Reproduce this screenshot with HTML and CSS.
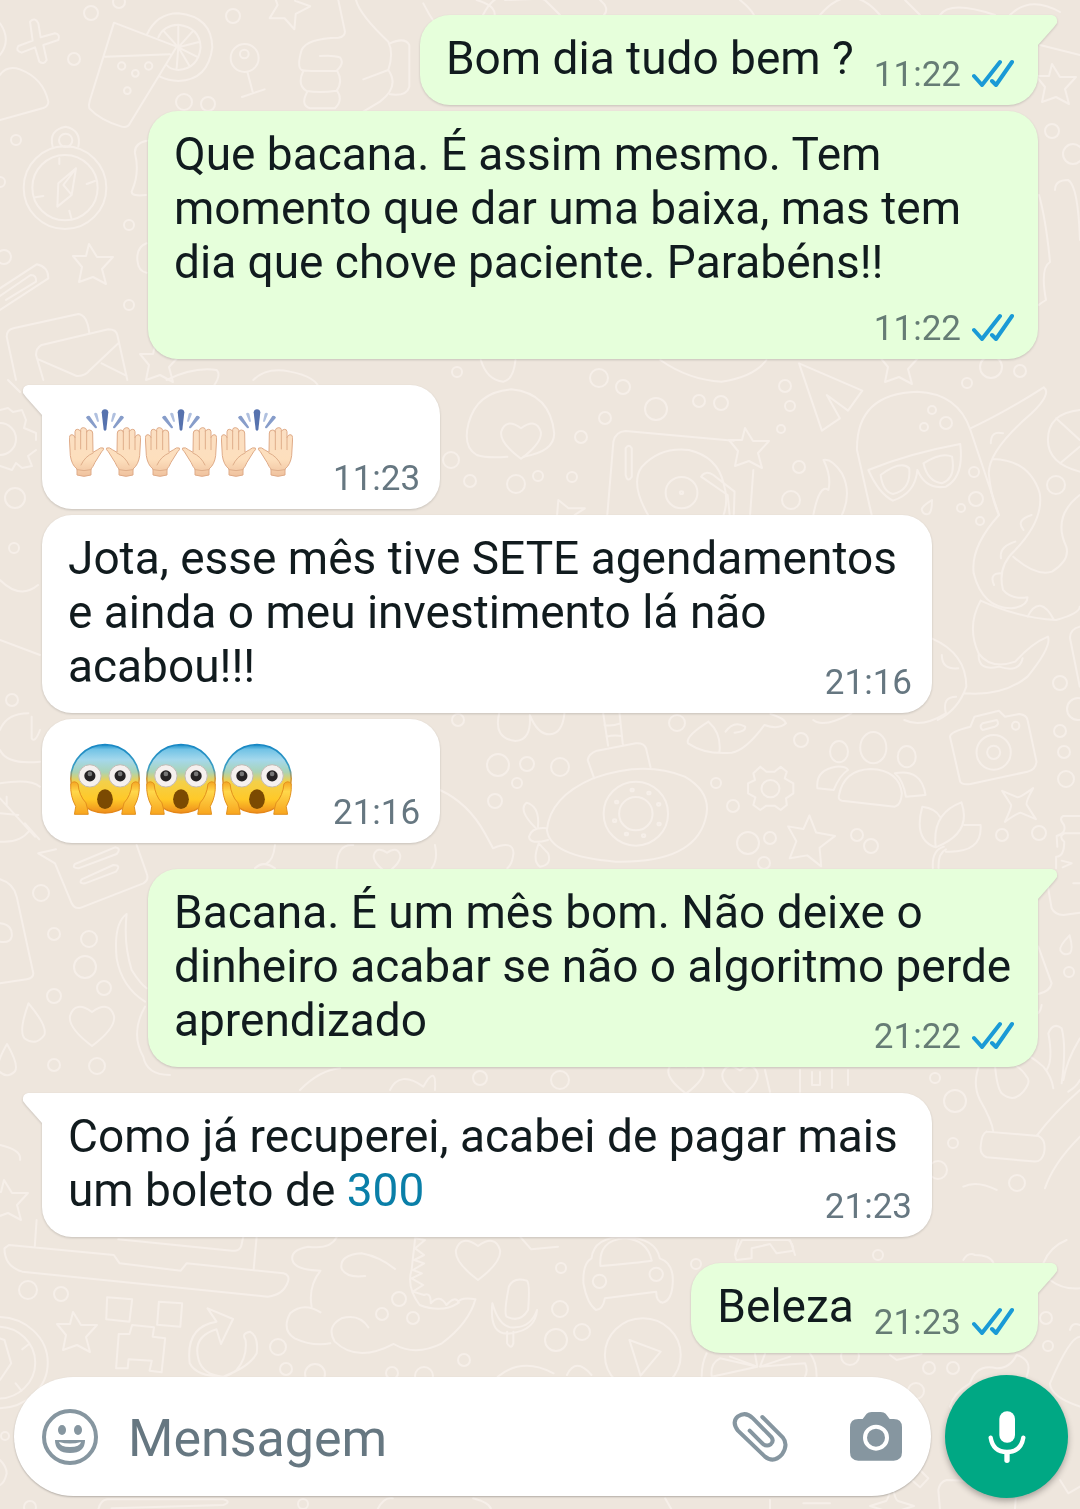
FILE: index.html
```html
<!DOCTYPE html>
<html lang="pt-BR">
<head>
    <meta charset="UTF-8">
    <meta name="viewport" content="width=device-width, initial-scale=1.0">
    <title>Conversa</title>
    <link rel="stylesheet" href="styles.css">
</head>
<body>
    <!-- Wallpaper -->
    <svg class="wallpaper" viewBox="0 0 1080 1509" preserveAspectRatio="xMidYMid slice" aria-hidden="true">
        <defs>
            <path id="star" d="M-4 -20L4 -7L20 -7L9 5L13 20L0 13L-14 18L-11 3L-20 -8L-7 -8Z"/>
            <path id="heart" d="M0 22Q-24 4 -22 -8Q-17 -24 0 -12Q17 -24 22 -8Q24 4 0 22Z"/>
            <path id="sparkle" d="M0 -22Q3 -6 6 -5L22 0L6 5Q4 7 0 22Q-4 7 -6 5L-22 0L-6 -5Q-4 -6 0 -22Z"/>
            <path id="drop" d="M0 -20Q-15 6 -10 14Q0 24 10 14Q15 6 0 -20Z"/>
        </defs>
        <!-- small bubbles -->
        <g>
            <circle cx="91" cy="13" r="7"/><circle cx="119" cy="2" r="6"/><circle cx="74" cy="59" r="6"/><circle cx="233" cy="16" r="7"/>
            <circle cx="184" cy="102" r="8"/><circle cx="208" cy="104" r="7"/><circle cx="16" cy="140" r="5"/><circle cx="0" cy="182" r="5"/>
            <circle cx="129" cy="225" r="5"/><circle cx="4" cy="257" r="7"/><circle cx="129" cy="305" r="5"/><circle cx="1052" cy="131" r="7"/>
            <circle cx="1073" cy="154" r="10"/><circle cx="457" cy="372" r="5"/><circle cx="599" cy="378" r="9"/><circle cx="623" cy="387" r="7"/>
            <circle cx="656" cy="409" r="11"/><circle cx="699" cy="401" r="6"/><circle cx="721" cy="403" r="7"/><circle cx="605" cy="418" r="6"/>
            <circle cx="581" cy="437" r="6"/><circle cx="451" cy="460" r="8"/><circle cx="470" cy="481" r="6"/><circle cx="516" cy="484" r="9"/>
            <circle cx="538" cy="476" r="5"/><circle cx="572" cy="477" r="5"/><circle cx="785" cy="386" r="6"/><circle cx="790" cy="406" r="5"/>
            <circle cx="781" cy="429" r="4"/><circle cx="799" cy="467" r="6"/><circle cx="791" cy="500" r="9"/><circle cx="967" cy="383" r="5"/>
            <circle cx="991" cy="367" r="11"/><circle cx="1020" cy="371" r="6"/><circle cx="932" cy="410" r="4"/><circle cx="946" cy="423" r="6"/>
            <circle cx="924" cy="427" r="4"/><circle cx="974" cy="472" r="5"/><circle cx="976" cy="499" r="7"/><circle cx="961" cy="508" r="4"/>
            <circle cx="980" cy="521" r="4"/><circle cx="1056" cy="485" r="9"/><circle cx="1060" cy="683" r="7"/><circle cx="1078" cy="709" r="11"/>
            <circle cx="15" cy="498" r="10"/><circle cx="14" cy="548" r="5"/><circle cx="12" cy="700" r="6"/><circle cx="458" cy="720" r="6"/>
            <circle cx="498" cy="765" r="11"/><circle cx="527" cy="764" r="7"/><circle cx="560" cy="767" r="9"/><circle cx="517" cy="783" r="5"/>
            <circle cx="495" cy="801" r="7"/><circle cx="677" cy="723" r="8"/><circle cx="801" cy="740" r="7"/><circle cx="716" cy="783" r="5"/>
            <circle cx="733" cy="806" r="6"/><circle cx="748" cy="843" r="11"/><circle cx="770" cy="838" r="6"/><circle cx="764" cy="863" r="6"/>
            <circle cx="857" cy="835" r="6"/><circle cx="871" cy="846" r="7"/><circle cx="1002" cy="835" r="6"/><circle cx="1039" cy="833" r="7"/>
            <circle cx="1060" cy="731" r="6"/><circle cx="1064" cy="752" r="6"/><circle cx="1066" cy="779" r="8"/><circle cx="41" cy="893" r="8"/>
            <circle cx="54" cy="934" r="6"/><circle cx="89" cy="939" r="8"/><circle cx="85" cy="967" r="11"/><circle cx="104" cy="988" r="7"/>
            <circle cx="54" cy="996" r="7"/><circle cx="54" cy="1065" r="6"/><circle cx="97" cy="1066" r="8"/><circle cx="1069" cy="972" r="5"/>
            <circle cx="992" cy="1022" r="6"/><circle cx="1015" cy="1024" r="7"/><circle cx="955" cy="1101" r="11"/><circle cx="935" cy="1078" r="5"/>
            <circle cx="953" cy="1143" r="5"/><circle cx="938" cy="1170" r="9"/><circle cx="1017" cy="1183" r="8"/>
            <circle cx="28" cy="1290" r="9"/><circle cx="61" cy="1294" r="7"/><circle cx="399" cy="1299" r="7"/><circle cx="382" cy="1314" r="6"/>
            <circle cx="413" cy="1318" r="6"/><circle cx="278" cy="1347" r="8"/><circle cx="286" cy="1369" r="6"/><circle cx="315" cy="1374" r="10"/>
            <circle cx="561" cy="1268" r="5"/><circle cx="560" cy="1309" r="8"/><circle cx="556" cy="1340" r="11"/><circle cx="582" cy="1332" r="8"/>
            <circle cx="464" cy="1360" r="6"/><circle cx="392" cy="1373" r="6"/><circle cx="424" cy="1376" r="9"/><circle cx="878" cy="1255" r="5"/>
            <circle cx="1046" cy="1318" r="6"/><circle cx="1048" cy="1346" r="5"/><circle cx="696" cy="1264" r="5"/><circle cx="850" cy="1356" r="9"/>
            <circle cx="929" cy="1368" r="6"/><circle cx="953" cy="1368" r="6"/><circle cx="916" cy="1391" r="8"/><circle cx="5" cy="1436" r="4"/>
            <circle cx="303" cy="1504" r="5"/><circle cx="30" cy="1507" r="6"/><circle cx="480" cy="1078" r="7"/><circle cx="560" cy="1080" r="9"/>
        </g>
        <!-- repeated shapes -->
        <g>
            <use href="#star" transform="translate(93 264)"/>
            <use href="#star" transform="translate(289 6) rotate(20)"/>
            <use href="#star" transform="translate(1056 84)"/>
            <use href="#star" transform="translate(899 364)"/>
            <use href="#star" transform="translate(749 448)"/>
            <use href="#star" transform="translate(160 362)"/>
            <use href="#star" transform="translate(810 840) rotate(10) scale(1.2)"/>
            <use href="#star" transform="translate(77 1332)"/>
            <use href="#star" transform="translate(8 1200)"/>
            <use href="#heart" transform="translate(92 1024)"/>
            <use href="#heart" transform="translate(521 439) scale(.9)"/>
            <use href="#heart" transform="translate(387 860) scale(.6)"/>
            <use href="#heart" transform="translate(478 1258)"/>
            <use href="#heart" transform="translate(686 1076) scale(.8)"/>
            <use href="#heart" transform="translate(740 1080) scale(.8)"/>
            <use href="#sparkle" transform="translate(1019 805) rotate(40)"/>
            <use href="#sparkle" transform="translate(960 1042) rotate(10)"/>
            <use href="#sparkle" transform="translate(892 1506)"/>
            <use href="#drop" transform="translate(32 1023) rotate(-10)"/>
            <use href="#drop" transform="translate(7 1060) scale(.8)"/>
            <use href="#drop" transform="translate(928 507) rotate(30) scale(.4)"/>
            <use href="#drop" transform="translate(1067 945) rotate(15) scale(.5)"/>
        </g>
        <!-- cross, glass with lemon, globe, thumb, compass, letters -->
        <g transform="scale(.3333)">
            <path d="M90 65Q105 50 115 70L122 112L165 100Q182 103 175 120L130 135L140 180Q132 195 118 185L105 142L65 158Q45 152 55 138L98 122Z"/>
            <path d="M342 68L530 140L390 370Q382 385 365 380Q300 360 268 325Q265 315 270 300ZM315 170L510 163M440 105Q470 40 535 40Q635 50 637 142Q625 240 535 243Q505 242 480 230M475 112Q490 76 535 74Q600 82 602 142Q595 205 535 210Q510 208 500 195M535 142L535 80M535 142L580 92M535 142L600 125M535 142L595 172M535 142L570 200M535 142L530 205M535 142L490 92"/>
            <circle cx="365" cy="198" r="11"/><circle cx="406" cy="220" r="10"/><circle cx="446" cy="198" r="11"/><circle cx="382" cy="272" r="10"/>
            <circle cx="734" cy="174" r="42"/><circle cx="733" cy="162" r="13"/>
            <path d="M742 215L758 275M726 291L794 268M0 70Q35 120 0 165M0 225Q20 195 60 208Q130 235 145 305Q145 318 130 324L0 360"/>
            <path d="M1015 0L1035 95Q1035 110 1015 113Q920 115 905 150Q890 200 905 210Q920 215 1010 212Q1035 190 1020 172Q1000 165 960 168M910 213Q890 255 920 273Q960 280 1010 272Q1030 245 1012 213M922 275Q900 315 930 325H1005Q1030 300 1012 273M1068 0Q1080 45 1165 125Q1182 160 1165 210L1090 238M1165 210Q1200 260 1140 305L1090 335M1170 130Q1215 110 1228 135V260Q1220 290 1170 283"/>
            <circle cx="195" cy="563" r="124"/><circle cx="195" cy="563" r="98"/><circle cx="197" cy="421" r="20"/>
            <path d="M158 440Q145 390 197 380Q245 390 235 440M228 505L215 585L172 620L175 550ZM228 505L190 555L215 585M178 475V492M285 543L260 552M130 588L106 592M208 632L214 655"/>
            <path d="M440 422Q402 430 405 460Q420 520 395 575Q395 590 438 585M440 730Q410 740 412 780Q415 815 440 818M0 865L110 793Q145 800 145 835L0 930M0 888L92 825Q110 825 108 845L18 900"/>
            <path d="M48 1140L20 1010Q20 990 40 985L235 942Q262 945 268 1000M130 1140L108 1065Q108 1045 125 1035L325 988Q348 988 352 1005L382 1140M115 1078L230 1128Q255 1130 270 1110L355 1030M305 1090L380 1128M500 1140Q580 1100 650 1110Q665 1125 640 1160M760 1140Q800 1100 870 1115Q950 1130 960 1170"/>
            <path d="M1270 10Q1300 70 1350 130M1430 0Q1500 20 1480 60"/>
        </g>
        <path d="M483 15Q500 -20 545 0Q555 10 560 15M505 0L560 -2M600 0Q610 8 604 15M740 0Q750 8 754 15M820 15Q850 -20 880 15M905 0L920 15M940 15Q950 0 995 15M1010 15Q1030 -5 1060 12M1040 45L1080 55M1055 190Q1055 180 1068 180Q1078 185 1080 240M1039 195Q1046 220 1050 262Q1040 268 1046 300Q1038 305 1039 305"/>
        <!-- cap, record player, penguin, octopus -->
        <g transform="translate(440 360) scale(.408 .3333)">
            <path d="M165 290Q115 295 90 285Q55 260 70 190Q90 95 175 88Q270 100 280 220Q280 275 205 290M100 0Q115 60 155 65Q180 60 185 0M540 0Q610 60 690 65Q770 50 800 0"/>
            <path d="M410 465L425 245Q430 215 455 213L720 242M768 330L760 465M510 465Q465 370 495 320Q540 260 610 270Q680 290 695 370Q708 420 695 465M640 350Q650 330 670 345L722 395L720 465M640 350L705 405L710 465M455 265Q463 250 470 265V350Q460 370 455 345Z"/>
            <ellipse cx="592" cy="398" rx="39" ry="47"/><circle cx="592" cy="398" r="4"/>
            <path d="M880 10L1035 92L1000 152L948 105L980 175L936 212ZM940 300Q960 295 985 340Q1010 400 985 465M940 300Q960 350 952 390Q930 370 915 465M1058 465L1022 270Q1020 100 1170 95Q1270 100 1300 210L1370 465M1050 330Q1150 280 1275 252Q1285 350 1240 380Q1190 390 1170 330Q1165 400 1110 422Q1075 400 1050 330Z"/>
            <path d="M1080 345Q1130 300 1150 325Q1155 390 1110 402Q1085 395 1080 345ZM1185 310Q1230 275 1255 290Q1265 355 1230 370Q1195 365 1185 310ZM1300 205Q1380 160 1480 82Q1500 100 1450 160Q1345 270 1345 340Q1350 410 1370 465Q1300 560 1308 640Q1330 745 1400 745Q1440 740 1440 712Q1400 720 1380 690Q1365 620 1410 570Q1480 480 1470 400Q1445 300 1355 297"/>
            <path d="M1405 590Q1460 650 1500 635Q1545 600 1535 560Q1500 470 1568 405M1325 722Q1420 775 1510 780Q1568 760 1568 740M1325 722Q1290 800 1320 880Q1350 930 1410 905Q1450 850 1490 830Q1500 860 1440 950Q1380 1010 1285 1000M1205 835Q1290 880 1290 980Q1270 1050 1220 1080M1568 150Q1490 160 1490 240Q1490 310 1568 335M1510 175L1568 240M1568 260L1520 310M1350 250Q1350 210 1380 220M1430 510Q1410 480 1450 465M1375 595Q1370 560 1410 545M1358 675Q1345 640 1375 640M1440 770Q1470 700 1505 780M1320 885Q1320 935 1370 920Q1420 940 1428 895M1230 885Q1230 930 1270 925M1240 1060Q1230 1010 1265 1010M1568 800Q1540 810 1545 840L1568 980"/>
            <path d="M287 465L290 420L315 445L355 445L330 465"/>
        </g>
        <!-- bauble, fish, gear, people, camera, tulip -->
        <g transform="translate(440 710) scale(.408 .3333)">
            <path d="M145 10Q130 85 185 93Q225 90 220 15Q240 75 270 73Q300 70 305 10M400 10L412 107M440 10L448 102M403 45Q420 50 442 40M408 80Q425 75 445 78M378 205L362 150Q365 130 385 122L480 100Q500 98 505 115L516 172M262 360Q270 260 375 205Q500 150 600 200Q670 250 650 330Q620 460 430 455Q270 440 262 360M262 355Q225 350 218 380Q220 405 265 390M235 355Q190 300 212 278Q245 290 240 350M242 400Q225 455 245 470Q275 465 265 430Z"/>
            <ellipse cx="480" cy="311" rx="79" ry="96"/><ellipse cx="480" cy="311" rx="41" ry="50"/>
            <circle cx="471" cy="240" r="4"/><circle cx="512" cy="249" r="4"/><circle cx="536" cy="283" r="4"/><circle cx="537" cy="342" r="4"/>
            <circle cx="499" cy="377" r="4"/><circle cx="457" cy="372" r="4"/><circle cx="428" cy="332" r="4"/><circle cx="433" cy="276" r="4"/>
            <path d="M658 35Q600 80 608 100Q650 135 715 128Q750 120 795 45Q830 60 848 40Q845 25 810 12M658 35Q690 70 685 125M700 65Q720 30 748 50Q750 65 722 68M915 30Q940 55 1008 10M1138 30Q1180 55 1240 10"/>
            <path d="M785 170L800 185H820L835 170L850 185L845 205L866 220V250L848 265L850 285L835 300L820 287H800L785 300L768 285L773 262L755 250V220L772 210L768 190Z"/>
            <ellipse cx="810" cy="236" rx="22" ry="26"/><ellipse cx="978" cy="125" rx="22" ry="32"/><ellipse cx="1062" cy="113" rx="32" ry="47"/><ellipse cx="1144" cy="140" rx="22" ry="32"/>
            <path d="M978 255Q990 180 1055 177Q1125 180 1132 250Q1130 285 1115 290L985 272Q975 270 978 255ZM965 240L925 235Q920 180 970 170Q995 168 1000 180Q980 195 965 240M1115 190Q1180 175 1190 255L1142 260Q1135 210 1115 190M1275 215L1250 80Q1250 65 1300 50L1310 20L1370 2L1385 20L1420 12Q1438 15 1440 30L1462 155Q1460 180 1440 185L1300 222Q1280 225 1275 215ZM1330 40L1365 30Q1372 45 1360 50L1330 60Q1320 50 1330 40"/>
            <ellipse cx="1357" cy="127" rx="42" ry="52"/><ellipse cx="1357" cy="127" rx="16" ry="20"/><ellipse cx="1411" cy="47" rx="9" ry="12"/>
            <path d="M1215 412Q1160 390 1182 290Q1215 295 1225 320M1278 277Q1205 310 1215 412Q1305 370 1278 277M1285 345H1325Q1330 430 1240 425M1208 475Q1205 420 1235 410M1222 475Q1220 430 1240 418M0 240Q70 280 110 370L130 415Q180 390 180 430Q178 460 165 475M1568 370H1530Q1515 380 1530 395Q1530 440 1510 440V475"/>
        </g>
        <!-- gear, leaves, sheet, wave -->
        <path d="M0 410L8 408L13 412L22 410L26 420L24 428L36 433V440M36 450L28 456L32 466L22 468L16 463L12 470L0 466M0 423A16 16 0 0 1 0 455M0 580Q20 600 38 585M0 640L40 655M8 380L20 392"/>
        <g transform="translate(0 710) scale(.3333)">
            <path d="M0 60Q20 10 85 10M0 120Q20 165 120 155M95 20V85Q105 100 120 60M0 220Q90 205 120 230M0 265L105 380M20 260V285M0 310L55 315M0 395Q60 400 90 360M75 340L118 388"/>
            <path d="M115 430L168 418M115 430L165 460L215 580Q225 600 245 592L430 520Q448 510 440 490L410 405M225 462L345 412Q365 415 350 432L235 475Q215 475 225 462ZM245 508L340 465Q365 465 348 485L255 520Q235 522 245 508ZM825 405Q820 450 800 460M765 475Q790 450 825 475M1010 475Q1010 400 1060 405M1305 405Q1315 450 1295 475"/>
            <path d="M0 508Q40 520 50 560L100 790Q100 805 80 808L0 820M0 640Q40 645 35 680Q30 700 0 695M380 612Q340 640 350 745Q365 830 435 875M380 612Q370 700 395 780Q420 820 440 835M435 890Q390 970 430 1040Q440 1095 510 1095M900 1140Q960 1080 1020 1075M1170 1140Q1200 1080 1270 1130Q1310 1060 1305 1140"/>
        </g>
        <!-- cat, hand -->
        <g transform="translate(900 700) scale(.3333)">
            <path d="M540 348H490Q475 355 492 375Q500 400 470 408L472 440M435 510L455 625Q465 645 490 645L540 638M485 482L515 490L488 502M520 550H540M415 740L455 850Q450 875 415 882M395 940Q420 950 425 915"/>
            <path d="M280 1295Q275 1260 240 1200Q215 1150 240 1090Q265 1060 285 1095Q290 1160 305 1180Q340 1210 370 1175Q395 1145 380 1130Q360 1095 295 1070Q270 1045 295 1040Q370 1045 430 1100Q455 1130 460 1165M440 1110Q460 1080 445 1000Q460 965 485 985Q500 1040 485 1150M490 1140Q500 1080 540 1015M540 1170Q460 1240 410 1308M505 1175Q530 1160 540 1140M260 1295L415 1308Q440 1320 432 1360Q425 1385 405 1385L260 1372Q240 1365 242 1340Q245 1300 260 1295M540 1310Q460 1390 435 1465M190 1460Q230 1440 290 1470"/>
        </g>
        <!-- laptop, creeper, dinosaur, microphone, car, play -->
        <g transform="translate(0 1220) scale(.4464 .3333)">
            <path d="M82 0L78 78M575 50L568 150M545 50L540 80Q535 95 520 92L265 58M20 75L255 105L268 130L405 152L418 130L635 160Q650 165 645 185Q635 225 600 230L50 155Q10 140 10 85ZM240 232L296 238L290 305L238 298ZM356 245L408 250L404 320L352 314ZM296 315L345 322L342 350L370 355L362 457L335 452L340 422L288 418L286 445L260 445L266 342L290 342Z"/>
            <path d="M500 470Q560 440 575 400Q580 350 560 335Q540 340 550 360Q555 410 530 450Q510 470 500 470Q440 470 425 430Q415 320 485 305L465 265L522 297L495 372L485 328Q430 350 445 420Q455 465 500 470"/>
            <path d="M755 50Q740 90 690 80Q650 90 655 120Q660 150 718 152Q690 200 698 260M885 147Q850 110 810 100Q760 105 765 145Q775 175 818 168M718 277Q680 245 650 280Q630 330 660 355Q700 380 740 370M825 322Q805 280 765 295Q730 320 750 365Q800 430 882 372Q930 410 990 370Q1050 310 1065 238Q1030 230 1025 250Q990 280 940 255Q910 200 922 150L930 55M930 55L952 60L930 85L950 105L928 120L950 130L925 150L945 160L922 175L948 195L925 215L950 225M950 225Q965 215 965 250Q985 220 1000 255Q1020 225 1028 248"/>
            <path d="M1140 200Q1150 170 1180 182Q1188 190 1183 270Q1165 310 1135 290Q1128 280 1140 200ZM1103 250Q1120 330 1155 322Q1190 320 1203 270M1103 250Q1095 350 1145 340Q1200 330 1203 270M1136 335V370Q1145 390 1150 370V335"/>
            <path d="M1325 115Q1330 50 1400 50Q1470 55 1478 115Q1510 130 1507 190Q1505 240 1485 248Q1470 245 1470 215L1355 235Q1350 270 1335 270Q1315 250 1307 190Q1305 130 1325 115ZM1345 138Q1340 60 1400 55Q1450 60 1460 122Q1430 128 1345 138M1165 50L1190 88L1250 80M1115 470Q1170 410 1240 460M1270 465Q1290 410 1325 465M1410 360L1480 395L1435 467Z"/>
            <ellipse cx="1343" cy="184" rx="15" ry="20"/><ellipse cx="1470" cy="163" rx="15" ry="20"/><ellipse cx="1440" cy="405" rx="85" ry="110"/><ellipse cx="-5" cy="428" rx="112" ry="137"/><ellipse cx="-5" cy="428" rx="84" ry="108"/>
            <path d="M0 355L10 360L25 430L0 480M50 388L65 372M35 490L48 512M0 720Q15 740 15 760Q10 790 0 795M220 870Q225 840 240 838H500Q520 845 500 855L250 865M845 870Q860 830 880 835M1060 835Q1100 850 1100 870M1490 835L1505 870"/>
        </g>
        <g transform="translate(680 1240) scale(.3333)">
            <path d="M175 0Q160 50 170 60L215 55V25L270 12L290 40L340 32Q340 10 325 0M850 60Q865 35 885 45Q930 45 940 68M1090 70Q1110 20 1160 0M1110 120Q1150 150 1200 145M65 410Q65 370 80 340M410 410Q410 365 390 340M95 410Q90 370 120 355L232 380ZM150 350L232 380L225 342M255 342L240 380L330 350M240 380L375 370Q385 390 375 410M630 345L650 360L725 342M810 500Q820 460 870 430Q890 370 950 385Q990 385 1010 345Q1060 360 1040 410M810 500L830 520M1200 290Q1170 290 1110 430Q1110 470 1200 500M1170 270Q1175 245 1200 255M720 690L745 715L720 742L695 720M780 807L775 750Q780 725 800 720L860 722M1005 807L1010 745L1060 740M1140 720L1165 760L1200 740M270 807V780M370 790H450"/>
        </g>
        <path d="M765 1070L770 1092M800 1070V1092M812 1072V1085H820V1072M832 1070V1088M848 1070V1085M735 1255L742 1240H790L795 1255M0 1145Q22 1150 20 1160"/>
    </svg>

    <!-- Shared icons -->
    <svg class="sprite" aria-hidden="true">
        <defs>
            <linearGradient id="skin" x1="0" y1="0" x2="0" y2="1">
                <stop offset="0" stop-color="#fbdfc3"/>
                <stop offset=".65" stop-color="#fddfbd"/>
                <stop offset="1" stop-color="#efc19d"/>
            </linearGradient>
            <linearGradient id="face" x1="0" y1="0" x2="0" y2="1">
                <stop offset="0" stop-color="#1a8fca"/>
                <stop offset=".07" stop-color="#72c3e6"/>
                <stop offset=".22" stop-color="#a4d8ec"/>
                <stop offset=".4" stop-color="#a9d3b6"/>
                <stop offset=".54" stop-color="#f3d04a"/>
                <stop offset=".8" stop-color="#ffc928"/>
                <stop offset="1" stop-color="#ee8d1b"/>
            </linearGradient>
            <linearGradient id="rim" x1="0" y1="0" x2="0" y2="1">
                <stop offset="0" stop-color="#1787c4"/>
                <stop offset=".35" stop-color="#3d9fc4"/>
                <stop offset=".5" stop-color="#d39a3c"/>
                <stop offset="1" stop-color="#e58616"/>
            </linearGradient>
            <linearGradient id="palm" x1="0" y1="0" x2="0" y2="1">
                <stop offset="0" stop-color="#f5a623"/>
                <stop offset=".3" stop-color="#ffd74a"/>
                <stop offset="1" stop-color="#f8a51e"/>
            </linearGradient>
        </defs>
        <symbol id="ticks" viewBox="0 0 42 28">
            <path d="M2 17L10 26L28 3M20 22L24 26L40 3" fill="none" stroke="#1a9ad6" stroke-width="4" stroke-linecap="round" stroke-linejoin="round"/>
        </symbol>
        <symbol id="hand" viewBox="0 0 216 216" overflow="visible">
            <path d="M24 198V180Q8 168 4 140L1 86Q2 76 9 77Q16 78 18 86V68Q19 60 26 61Q33 62 35 68V62Q36 55 44 56Q52 57 53 64V70Q54 62 62 63Q71 64 71 72L72 130L86 122Q94 114 103 117Q106 122 98 128L78 160Q72 174 66 180V198Q45 206 24 198Z" fill="url(#skin)" stroke="#dfab88" stroke-width="3"/>
            <path d="M18 86V122M35 68V120M53 70V122M72 132Q48 142 36 168M24 182Q45 188 66 182" fill="none" stroke="#dfae8a" stroke-width="3" stroke-linecap="round"/>
        </symbol>
        <symbol id="raised-hands" viewBox="0 0 216 216">
            <use href="#hand" width="216" height="216"/>
            <use href="#hand" width="216" height="216" transform="translate(216 0) scale(-1 1)"/>
            <path d="M98 10Q99 1 108 1Q117 1 118 10L112 62Q108 68 104 62Z" fill="#5672ae"/>
            <path d="M51 26Q54 18 62 21L84 54Q84 60 78 57ZM165 26Q162 18 154 21L132 54Q132 60 138 57Z" fill="#879dca"/>
            <path d="M75 14Q80 9 85 14L90 37Q87 41 84 37ZM141 14Q136 9 131 14L126 37Q129 41 132 37Z" fill="#b0c0df"/>
        </symbol>
        <symbol id="scream" viewBox="0 0 216 219">
            <circle cx="108" cy="109" r="104" fill="url(#face)" stroke="url(#rim)" stroke-width="5"/>
            <circle cx="62" cy="100" r="34" fill="#f5f0ee" stroke="#c0b9b4" stroke-width="3"/>
            <circle cx="154" cy="100" r="34" fill="#f5f0ee" stroke="#c0b9b4" stroke-width="3"/>
            <circle cx="62" cy="100" r="17" fill="#262324"/>
            <circle cx="154" cy="100" r="17" fill="#262324"/>
            <circle cx="62" cy="94" r="7" fill="#777"/>
            <circle cx="154" cy="94" r="7" fill="#777"/>
            <ellipse cx="108" cy="171" rx="24" ry="30" fill="#7b4a02"/>
            <path d="M4 124Q14 112 26 124Q29 160 50 182Q55 198 57 217H15L19 193Q1 160 4 124Z" fill="url(#palm)" stroke="#e28f1c" stroke-width="3"/>
            <path d="M212 124Q202 112 190 124Q187 160 166 182Q161 198 159 217H201L197 193Q215 160 212 124Z" fill="url(#palm)" stroke="#e28f1c" stroke-width="3"/>
        </symbol>
    </svg>

    <main class="chat">
        <div class="message message-out tail">
            Bom dia tudo bem ?
            <span class="meta"><time>11:22</time><svg class="ticks" role="img" aria-label="Lida"><use href="#ticks"/></svg></span>
        </div>
        <div class="message message-out">
            Que bacana. É assim mesmo. Tem momento que dar uma baixa, mas tem dia que chove paciente. Parabéns!!
            <span class="meta meta-below"><time>11:22</time><svg class="ticks" role="img" aria-label="Lida"><use href="#ticks"/></svg></span>
        </div>

        <div class="message message-in message-emoji tail">
            <span class="emojis">
                <svg class="emoji" role="img" aria-label="Mãos levantadas"><use href="#raised-hands"/></svg>
                <svg class="emoji" role="img" aria-label="Mãos levantadas"><use href="#raised-hands"/></svg>
                <svg class="emoji" role="img" aria-label="Mãos levantadas"><use href="#raised-hands"/></svg>
            </span>
            <span class="meta"><time>11:23</time></span>
        </div>
        <div class="message message-in">
            Jota, esse mês tive SETE agendamentos e ainda o meu investimento lá não acabou!!!
            <span class="meta"><time>21:16</time></span>
        </div>
        <div class="message message-in message-emoji">
            <span class="emojis">
                <svg class="emoji" role="img" aria-label="Rosto gritando de medo"><use href="#scream"/></svg>
                <svg class="emoji" role="img" aria-label="Rosto gritando de medo"><use href="#scream"/></svg>
                <svg class="emoji" role="img" aria-label="Rosto gritando de medo"><use href="#scream"/></svg>
            </span>
            <span class="meta"><time>21:16</time></span>
        </div>

        <div class="message message-out tail">
            Bacana. É um mês bom. Não deixe o dinheiro acabar se não o algoritmo perde aprendizado
            <span class="meta"><time>21:22</time><svg class="ticks" role="img" aria-label="Lida"><use href="#ticks"/></svg></span>
        </div>

        <div class="message message-in tail">
            Como já recuperei, acabei de pagar mais um boleto de <a class="link" href="tel:300">300</a>
            <span class="meta"><time>21:23</time></span>
        </div>

        <div class="message message-out tail">
            Beleza
            <span class="meta"><time>21:23</time><svg class="ticks" role="img" aria-label="Lida"><use href="#ticks"/></svg></span>
        </div>
    </main>

    <form class="composer">
        <div class="field">
            <button class="icon-button" type="button" aria-label="Emoji">
                <svg width="56" height="56" viewBox="0 0 56 56">
                    <circle cx="28" cy="28" r="26" fill="none" stroke="#8696a0" stroke-width="4"/>
                    <ellipse cx="20" cy="21" rx="4" ry="5" fill="#8696a0"/>
                    <ellipse cx="36" cy="21" rx="4" ry="5" fill="#8696a0"/>
                    <path d="M13 31H43Q43 44 28 44Q13 44 13 31Z" fill="#8696a0"/>
                    <path d="M17 33Q28 36 39 33Q38 38 28 38Q18 38 17 33Z" fill="#fff"/>
                </svg>
            </button>
            <input class="text-input" type="text" placeholder="Mensagem" aria-label="Mensagem">
            <button class="icon-button" type="button" aria-label="Anexar">
                <svg width="56" height="52" viewBox="156 512 168 156">
                    <path d="M247 530L308 591Q326 613 306 642Q281 670 254 648L174 571Q154 545 174 528Q197 512 219 534L274 590Q283 602 272 612Q260 620 248 610L209 571" fill="none" stroke="#8696a0" stroke-width="12" stroke-linecap="round"/>
                </svg>
            </button>
            <button class="icon-button" type="button" aria-label="Câmera">
                <svg width="52" height="49" viewBox="510 514 156 147">
                    <path d="M535 535H548L560 519Q565 514 575 514H602Q612 514 617 519L629 535H641Q666 535 666 560V635Q666 660 641 660H535Q510 660 510 635V560Q510 535 535 535Z" fill="#8696a0"/>
                    <circle cx="588" cy="591" r="33" fill="none" stroke="#fff" stroke-width="12"/>
                </svg>
            </button>
        </div>
        <button class="mic-button" type="button" aria-label="Gravar áudio">
            <svg width="40" height="52" viewBox="918 513 120 156">
                <rect x="955" y="514" width="47" height="94" rx="23" fill="#fff"/>
                <path d="M929 593Q936 636 978 636Q1020 636 1027 593" fill="none" stroke="#fff" stroke-width="13" stroke-linecap="round"/>
                <path d="M978 638V661" stroke="#fff" stroke-width="16" stroke-linecap="round"/>
            </svg>
        </button>
    </form>
</body>
</html>
```

FILE: styles.css
```css
* {
    box-sizing: border-box;
}
body {
    font-family: Roboto, Arial, sans-serif;
    font-size: 46px;
    line-height: 54px;
    color: #111b1e;
    background-color: #eee6dd;
    margin: 0;
    min-height: 100vh;
    display: flex;
    flex-direction: column;
}
.wallpaper {
    position: fixed;
    top: 0;
    left: 0;
    width: 100%;
    height: 100%;
    z-index: -1;
    fill: none;
    stroke: #f6efe9;
    stroke-width: 2px;
    stroke-linecap: round;
    stroke-linejoin: round;
}
.wallpaper path,
.wallpaper circle,
.wallpaper ellipse {
    vector-effect: non-scaling-stroke;
}
.sprite {
    position: absolute;
    width: 0;
    height: 0;
}

/* Messages */
.chat {
    flex: 1;
    display: flex;
    flex-direction: column;
    align-items: flex-start;
    gap: 6px;
    padding: 15px 42px 0;
}
.message {
    display: flow-root;
    position: relative;
    max-width: calc(100% - 106px);
    padding: 16px 20px 10px 26px;
    border-radius: 30px;
    filter: drop-shadow(0 1px 1px rgba(0, 0, 0, 0.16));
}
.message-in {
    background-color: #fff;
}
.message-out {
    align-self: flex-end;
    background-color: #e6ffdb;
    padding-right: 24px;
}
.tail:not(:first-child) {
    margin-top: 20px;
}
.message-in.tail {
    border-top-left-radius: 0;
}
.message-out.tail {
    border-top-right-radius: 0;
}
.tail::before {
    content: "";
    position: absolute;
    top: 0;
    left: 100%;
    width: 20px;
    height: 30px;
    background-color: inherit;
    clip-path: path("M0 0H14Q20 1 19 8L16 12L0 30Z");
}
.message-in.tail::before {
    left: auto;
    right: 100%;
    transform: scaleX(-1);
}
.meta {
    float: right;
    display: flex;
    align-items: flex-start;
    gap: 11px;
    margin-top: 24px;
    margin-left: 20px;
    font-size: 35px;
    line-height: 40px;
    color: #667781;
}
.message-out .meta {
    color: #667c75;
}
.message .meta-below {
    margin-top: 20px;
}
.ticks {
    width: 42px;
    height: 28px;
    margin-top: 4px;
}
.message-emoji {
    display: flex;
    align-items: flex-end;
    padding-left: 27px;
}
.message-emoji .meta {
    margin-left: 40px;
}
.emojis {
    display: flex;
    gap: 4px;
    padding: 8px 0 18px;
}
.emoji {
    width: 72px;
    height: 72px;
}
.link {
    color: #0a7fa8;
    text-decoration: none;
}

/* Message bar */
.composer {
    display: flex;
    align-items: center;
    gap: 14px;
    padding: 22px 12px 11px 14px;
}
.field {
    flex: 1;
    min-width: 0;
    display: flex;
    align-items: center;
    height: 119px;
    padding: 0 29px 0 28px;
    border-radius: 60px;
    background-color: #fff;
    box-shadow: 0 1px 2px rgba(0, 0, 0, 0.25);
}
.icon-button {
    display: flex;
    padding: 0;
    border: none;
    background: none;
    cursor: pointer;
}
.icon-button + .icon-button {
    margin-left: 62px;
}
.text-input {
    flex: 1;
    min-width: 0;
    padding: 0;
    margin: 4px 20px 0 30px;
    border: none;
    outline: none;
    background: none;
    font-family: inherit;
    font-size: 52px;
    color: #111b1e;
}
.text-input::placeholder {
    color: #667781;
    opacity: 1;
}
.mic-button {
    display: flex;
    align-items: center;
    justify-content: center;
    width: 123px;
    height: 123px;
    padding: 0;
    border: none;
    border-radius: 50%;
    background-color: #00a884;
    box-shadow: 0 3px 6px rgba(0, 0, 0, 0.3);
    cursor: pointer;
}
```
